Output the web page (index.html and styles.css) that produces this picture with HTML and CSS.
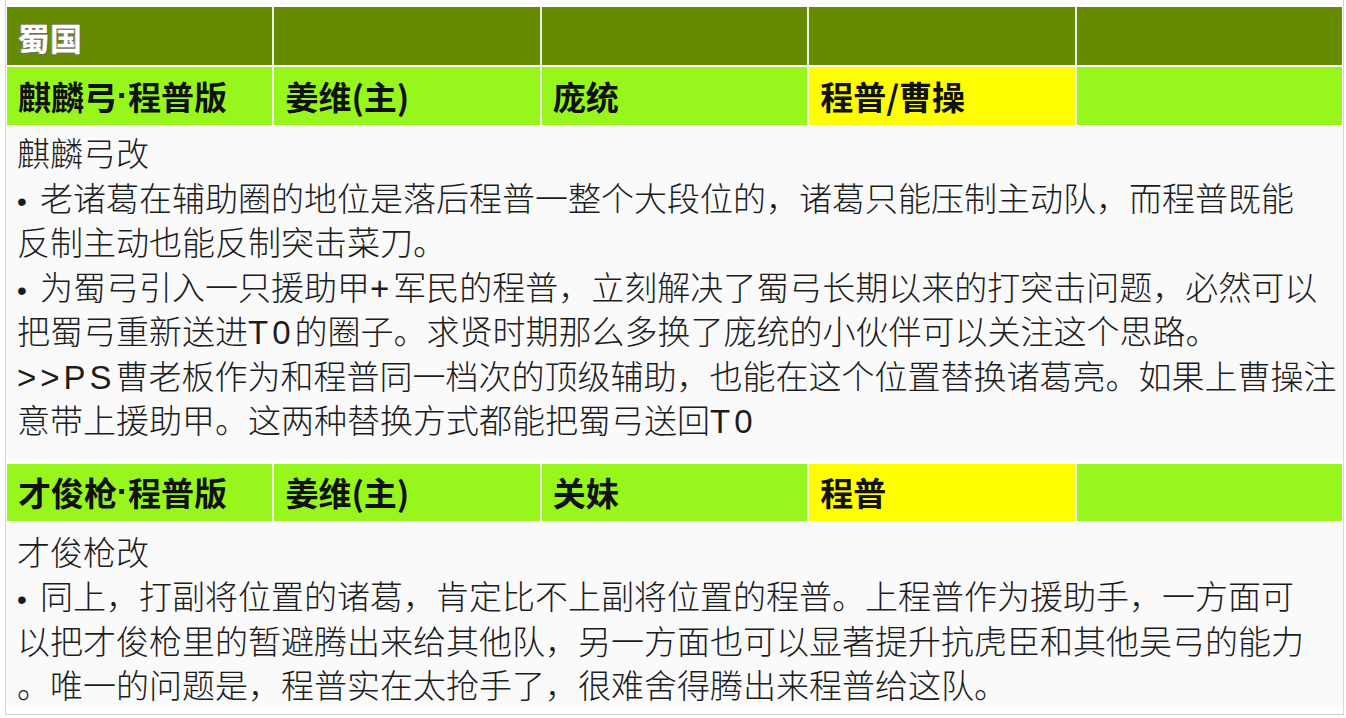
FILE: index.html
```html
<!DOCTYPE html>
<html lang="zh-CN">
<head>
<meta charset="utf-8">
<title>蜀国</title>
<link rel="stylesheet" href="styles.css">
</head>
<body>
<div class="panel">
  <div class="grid">
    <div class="cell dark"><span class="country">蜀国</span></div>
    <div class="cell dark"></div>
    <div class="cell dark"></div>
    <div class="cell dark"></div>
    <div class="cell dark"></div>
  </div>
  <div class="grid grid-next">
    <div class="cell lime">麒麟弓<span class="mid">·</span>程普版</div>
    <div class="cell lime">姜维(主)</div>
    <div class="cell lime">庞统</div>
    <div class="cell yellow">程普/曹操</div>
    <div class="cell lime"></div>
  </div>
  <div class="notes notes-first">
    <div class="line">麒麟弓改</div>
    <div class="line"><span class="dot">•</span>老诸葛在辅助圈的地位是落后程普一整个大段位的，诸葛只能压制主动队，而程普既能</div>
    <div class="line">反制主动也能反制突击菜刀。</div>
    <div class="line"><span class="dot">•</span>为蜀弓引入一只援助甲<span class="lat">+</span>军民的程普，立刻解决了蜀弓长期以来的打突击问题，必然可以</div>
    <div class="line">把蜀弓重新送进<span class="lat">T0</span>的圈子。求贤时期那么多换了庞统的小伙伴可以关注这个思路。</div>
    <div class="line"><span class="lat">&gt;&gt;PS</span>曹老板作为和程普同一档次的顶级辅助，也能在这个位置替换诸葛亮。如果上曹操注</div>
    <div class="line">意带上援助甲。这两种替换方式都能把蜀弓送回<span class="lat">T0</span></div>
  </div>
  <div class="grid grid-second">
    <div class="cell lime">才俊枪<span class="mid">·</span>程普版</div>
    <div class="cell lime">姜维(主)</div>
    <div class="cell lime">关妹</div>
    <div class="cell yellow">程普</div>
    <div class="cell lime"></div>
  </div>
  <div class="notes notes-last">
    <div class="line">才俊枪改</div>
    <div class="line"><span class="dot">•</span>同上，打副将位置的诸葛，肯定比不上副将位置的程普。上程普作为援助手，一方面可</div>
    <div class="line">以把才俊枪里的暂避腾出来给其他队，另一方面也可以显著提升抗虎臣和其他吴弓的能力</div>
    <div class="line">。唯一的问题是，程普实在太抢手了，很难舍得腾出来程普给这队。</div>
  </div>
</div>
</body>
</html>
```

FILE: styles.css
```css
html, body {
  margin: 0;
  padding: 0;
  background: #ffffff;
}

body {
  font-family: "Noto Sans CJK SC", "Noto Sans", sans-serif;
  color: #161616;
  width: 1346px;
  height: 718px;
  overflow: hidden;
}

.panel {
  margin: 0 2px 0 5px;
  padding-top: 7px;
  border-left: 1px solid #d4d4d8;
  border-right: 1px solid #d8d8dc;
  border-bottom: 1px solid #cfcfd3;
  height: 707px;
  box-sizing: content-box;
}

.grid {
  display: grid;
  grid-template-columns: repeat(5, 1fr);
  column-gap: 2px;
  margin: 0 1px;
  background: #eef2e4;
}

.grid-next {
  margin-top: 2px;
}

.grid-second {
  margin-top: 3px;
}

.cell {
  height: 58px;
  display: flex;
  align-items: center;
  padding-left: 11px;
  font-size: 33px;
  font-weight: 700;
  color: #111;
  white-space: nowrap;
}

.grid-second .cell {
  height: 57px;
}

.mid {
  font-family: "Liberation Sans", Arial, sans-serif;
  font-weight: 700;
  width: 11px;
  text-align: center;
}

.dark {
  background: #678b00;
}

.lime {
  background: #97f61c;
}

.yellow {
  background: #fffd00;
}

.country {
  color: #ffffff;
  font-size: 32px;
  text-shadow: 1px 1px 0 #6f6f60, -1px 0 0 #9a9a88, 0 -1px 0 #9a9a88;
  margin-top: 2px;
}

.notes {
  background: #fafafb;
  padding-left: 11px;
  font-size: 33px;
  font-weight: 300;
  line-height: 44.5px;
  color: #1c1c1c;
  white-space: nowrap;
}

.notes-first {
  margin-top: 1px;
  padding-top: 4px;
  padding-bottom: 19px;
}

.notes-last {
  padding-top: 8px;
  height: 186px;
  box-sizing: border-box;
}

.line {
  height: 44.5px;
}

.dot {
  display: inline-block;
  width: 23px;
  font-family: "Liberation Sans", Arial, sans-serif;
  font-size: 28px;
}

.lat {
  font-family: "Liberation Sans", Arial, sans-serif;
  letter-spacing: 4px;
}
```
